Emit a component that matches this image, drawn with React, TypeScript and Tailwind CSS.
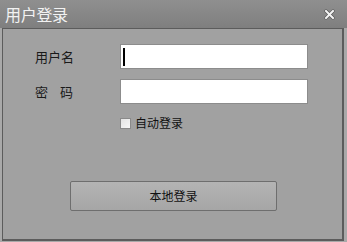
import React from "react";

export default function App() {
  const font = { fontFamily: '"Noto Sans CJK SC", "Noto Sans", sans-serif' };
  return (
    <div className="w-[347px] h-[242px] bg-[#a9a9a9] flex flex-col overflow-hidden" style={font}>
      <div className="h-[28px] flex items-center justify-between pl-[5px] pr-[12px] bg-gradient-to-b from-[#8f8f8f] to-[#7f7f7f]">
        <span className="text-[16px] leading-none text-[#f2f2f2] tracking-[-0.3px]">用户登录</span>
        <svg width="11" height="11" viewBox="0 0 11 11">
          <path d="M2 2 L9 9 M9 2 L2 9" stroke="#555" strokeWidth="3.2" strokeLinecap="square" />
          <path d="M2 2 L9 9 M9 2 L2 9" stroke="#f4f4f4" strokeWidth="2" strokeLinecap="square" />
        </svg>
      </div>
      <div className="ml-[2px] mr-[3px] h-[213px] border-t border-l border-r-2 border-b-2 border-[#5c5c5c] bg-[#a1a1a1] flex flex-col pt-[15px]">
        <div className="flex items-center pl-[32px]">
          <span className="w-[85px] text-[13px] text-[#1a1a1a] leading-none">用户名</span>
          <div className="w-[188px] h-[25px] bg-white border border-[#8c8c8c] flex items-center pl-[2px]">
            <div className="w-[2px] h-[18px] bg-black" />
          </div>
        </div>
        <div className="flex items-center pl-[32px] mt-[10px]">
          <span className="w-[85px] text-[13px] text-[#1a1a1a] leading-none">
            密<span className="inline-block w-[12px]" />码
          </span>
          <div className="w-[188px] h-[25px] bg-white border border-[#8c8c8c]" />
        </div>
        <div className="flex items-center pl-[117px] mt-[13px]">
          <div className="w-[11px] h-[11px] border border-[#8a8a8a] bg-gradient-to-br from-[#e4e4e4] to-[#f8f8f8]" />
          <span className="ml-[4px] text-[12px] text-[#111] leading-none">自动登录</span>
        </div>
        <div className="pl-[67px] mt-[52px]">
          <div className="w-[207px] h-[30px] rounded-[2px] border border-[#6e6e6e] bg-gradient-to-b from-[#b4b4b4] to-[#a6a6a6] flex items-center justify-center">
            <span className="text-[12px] text-[#111] leading-none">本地登录</span>
          </div>
        </div>
      </div>
    </div>
  );
}
